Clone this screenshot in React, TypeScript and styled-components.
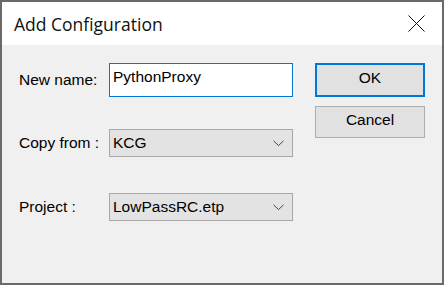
import React from "react";
import styled, { createGlobalStyle } from "styled-components";

const GlobalStyle = createGlobalStyle`
  html, body {
    margin: 0;
    padding: 0;
    background: #ffffff;
  }
  * {
    box-sizing: border-box;
  }
`;

const Window = styled.div`
  width: 444px;
  height: 285px;
  border: 2px solid #6a6a6a;
  display: flex;
  flex-direction: column;
  background: #f0f0f0;
  font-family: "Liberation Sans", Arial, sans-serif;
  color: #000;
`;

const TitleBar = styled.div`
  height: 43px;
  background: #ffffff;
  display: flex;
  align-items: center;
  justify-content: space-between;
  padding-left: 12px;
`;

const Title = styled.h1`
  margin: 0;
  font-family: "Open Sans", "Noto Sans", sans-serif;
  font-size: 17.5px;
  font-weight: 400;
  color: #111;
`;

const CloseButton = styled.button`
  width: 46px;
  height: 43px;
  border: none;
  background: none;
  padding: 0;
  display: flex;
  align-items: center;
  justify-content: center;
  margin-right: 3px;
`;

const Body = styled.div`
  flex: 1;
  display: flex;
  padding: 18px 17px 0 17px;
`;

const Form = styled.div`
  display: flex;
  flex-direction: column;
`;

const Row = styled.div<{ $top: number }>`
  display: flex;
  align-items: center;
  margin-top: ${(p) => p.$top}px;
`;

const Label = styled.label`
  width: 90px;
  font-size: 15.5px;
`;

const NameInput = styled.input`
  width: 184px;
  height: 34px;
  border: 1px solid #0078d7;
  background: #ffffff;
  padding: 0 0 6px 3px;
  font-family: "Liberation Sans", Arial, sans-serif;
  font-size: 15.5px;
  color: #000;
  outline: none;
`;

const Select = styled.div`
  width: 184px;
  height: 28px;
  border: 1px solid #a8a8a8;
  background: #e3e3e3;
  display: flex;
  align-items: center;
  justify-content: space-between;
  padding: 0 8px 0 3px;
  font-size: 15.5px;
`;

const Buttons = styled.div`
  margin-left: 22px;
  display: flex;
  flex-direction: column;
  gap: 9px;
`;

const DialogButton = styled.button<{ $primary?: boolean }>`
  width: 110px;
  height: ${(p) => (p.$primary ? 34 : 32)}px;
  background: #e1e1e1;
  border: ${(p) => (p.$primary ? "2px solid #0078d7" : "1px solid #adadad")};
  font-family: "Liberation Sans", Arial, sans-serif;
  font-size: 15.5px;
  color: #000;
  padding: 0 0 4px 0;
`;

const Chevron = () => (
  <svg width="11" height="7" viewBox="0 0 11 7">
    <path d="M0.5 0.8 L5.5 5.6 L10.5 0.8" fill="none" stroke="#444" strokeWidth="1" />
  </svg>
);

const CloseIcon = () => (
  <svg width="17" height="17" viewBox="0 0 17 17">
    <path d="M0.5 0.5 L16.5 16.5 M16.5 0.5 L0.5 16.5" stroke="#111" strokeWidth="1" />
  </svg>
);

export default function App() {
  return (
    <>
      <GlobalStyle />
      <Window>
        <TitleBar>
          <Title>Add Configuration</Title>
          <CloseButton>
            <CloseIcon />
          </CloseButton>
        </TitleBar>
        <Body>
          <Form>
            <Row $top={0}>
              <Label>New name:</Label>
              <NameInput readOnly defaultValue="PythonProxy" />
            </Row>
            <Row $top={32}>
              <Label>Copy from :</Label>
              <Select>
                KCG
                <Chevron />
              </Select>
            </Row>
            <Row $top={36}>
              <Label>Project :</Label>
              <Select>
                LowPassRC.etp
                <Chevron />
              </Select>
            </Row>
          </Form>
          <Buttons>
            <DialogButton $primary>OK</DialogButton>
            <DialogButton>Cancel</DialogButton>
          </Buttons>
        </Body>
      </Window>
    </>
  );
}
